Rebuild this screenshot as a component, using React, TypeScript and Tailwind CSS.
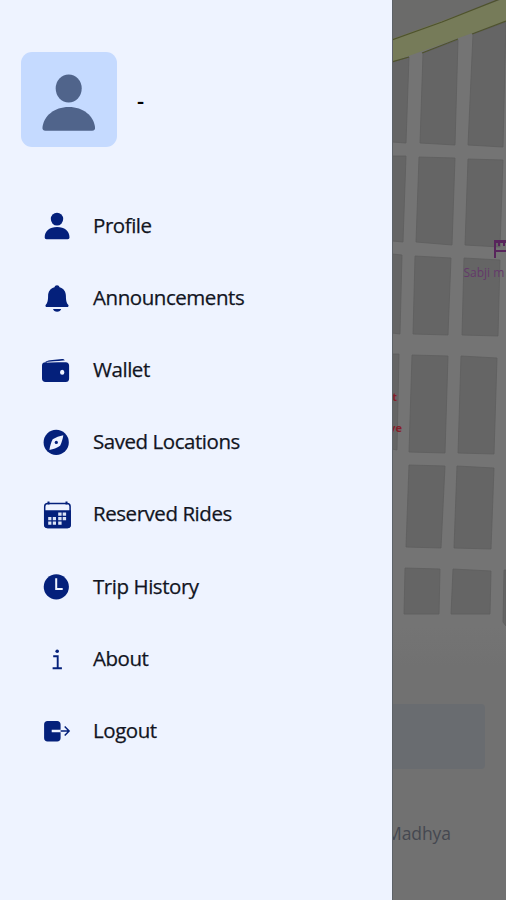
import type { ReactNode } from "react";

type Item = { label: string; icon: ReactNode };

function Icon({ children }: { children: ReactNode }) {
  return (
    <svg viewBox="0 0 32 32" className="h-8 w-8 shrink-0" fill="currentColor" aria-hidden="true">
      {children}
    </svg>
  );
}

const items: Item[] = [
  {
    label: "Profile",
    icon: (
      <Icon>
        <ellipse cx="17" cy="9.1" rx="6.2" ry="6.4" />
        <path d="M4.7 27.3c0-6.6 5.1-10.4 12.4-10.4s12.4 3.8 12.4 10.4c0 1.3-.6 2-1.9 2h-21c-1.3 0-1.9-.7-1.9-2Z" />
      </Icon>
    ),
  },
  {
    label: "Announcements",
    icon: (
      <Icon>
        <path d="M17 3.2c-1.4 0-2.2.8-2.5 2-4.2 1-6.4 4.5-6.4 8.5 0 6-1.2 7.7-2.3 9-.8 1-.3 2.4 1.2 2.4h20c1.5 0 2-1.4 1.2-2.4-1.1-1.3-2.3-3-2.3-9 0-4-2.2-7.5-6.4-8.5-.3-1.2-1.1-2-2.5-2Z" />
        <path d="M13 27h8.2c-.4 1.600-2 2.700-4.100 2.700s-3.700-1.100-4.100-2.700Z" />
      </Icon>
    ),
  },
  {
    label: "Wallet",
    icon: (
      <Icon>
        <path d="M5 8.3c1.200-1.200 3-1.700 5-2l12-1.400c1.400-.1 2.500.4 2.900 1.600L5 8.300Z" />
        <path
          fillRule="evenodd"
          d="M5.500 8.200h20.300c2 0 3.300 1.300 3.300 3.300v13.300c0 2-1.300 3.300-3.300 3.300H5.500c-2.200 0-3.500-1.300-3.500-3.500V11.400c0-2 1.400-3.200 3.500-3.200Zm16.700 7.500a2.200 2.500 0 1 0 0 5 2.200 2.500 0 0 0 0-5Z"
        />
        <path d="m7 8.300 18-1.300" stroke="#eef3ff" strokeWidth=".6" />
      </Icon>
    ),
  },
  {
    label: "Saved Locations",
    icon: (
      <Icon>
        <circle cx="16.200" cy="15.400" r="12.600" />
        <path d="M23.300 8.200c-.5 3.500-1.500 7-3.200 10.600-3.300 2.200-6.700 3.500-10.700 4.200.7-4 1.500-7.200 3.300-10.700 3.300-2 6.600-3.300 10.600-4.100Z" fill="#eef3ff" />
        <circle cx="16.300" cy="15.400" r="1.600" />
      </Icon>
    ),
  },
  {
    label: "Reserved Rides",
    icon: (
      <Icon>
        <rect x="4.700" y="4.400" width="25.400" height="24" rx="3" fill="#eef3ff" stroke="currentColor" strokeWidth="1.500" />
        <path d="M4 11.300h26.900v14.500c0 2.300-1 3.500-3.300 3.500H7.300C5 29.300 4 28 4 25.800Z" />
        <path d="M8.500 2.500v3M26.500 2.500v3" stroke="currentColor" strokeWidth="2" />
        <path
          d="M18.200 13.500h3.400v3.200h-3.400zM22.700 13.500h3.400v3.200h-3.400zM8.200 18h3.200v3.300H8.200zM12.800 18H16v3.300h-3.200zM18.200 18h3.400v3.300h-3.400zM22.700 18h3.400v3.300h-3.400zM8.200 22.500h3.200v3.300H8.200zM12.800 22.500H16v3.300h-3.200zM18.200 22.500h3.400v3.300h-3.400z"
          fill="#dce4f6"
        />
      </Icon>
    ),
  },
  {
    label: "Trip History",
    icon: (
      <Icon>
        <circle cx="16.300" cy="15.800" r="12.600" />
        <path d="M16.200 7.300V18h6.500" fill="none" stroke="#eef3ff" strokeWidth="2" />
      </Icon>
    ),
  },
  {
    label: "About",
    icon: (
      <Icon>
        <circle cx="17.200" cy="8.300" r="1.800" />
        <path d="M13.200 13.300h4.500v12M12.600 25.300h9.300" fill="none" stroke="currentColor" strokeWidth="1.900" />
      </Icon>
    ),
  },
  {
    label: "Logout",
    icon: (
      <Icon>
        <path d="M7.500 6h9.700c2 0 3.400 1.300 3.400 3.400v5.300h-8.900v2.600h8.900v5.700c0 2.200-1.300 3.500-3.400 3.500H7.500c-2.100 0-3.400-1.300-3.400-3.500V9.400C4.100 7.300 5.400 6 7.500 6Z" />
        <path d="M20.600 16H29M24.700 11.500l4.400 4.500-4.400 4.500" fill="none" stroke="currentColor" strokeWidth="1.500" />
      </Icon>
    ),
  },
];

const blocks = [
  "392,62 409,57 406,143 392,142",
  "423,53 458,40 455,145 420,143",
  "473,34 506,22 503,147 468,145",
  "392,156 406,156 403,242 392,241",
  "419,157 455,158 452,245 416,242",
  "468,159 503,160 500,247 465,245",
  "392,254 402,255 400,334 392,333",
  "415,256 451,258 448,335 413,334",
  "464,258 500,260 498,336 462,335",
  "392,354 399,354 397,450 392,449",
  "412,355 448,356 445,453 409,452",
  "461,356 497,358 494,454 458,453",
  "409,465 445,466 441,548 406,547",
  "457,466 494,468 491,549 454,548",
  "405,568 440,569 439,614 404,614",
  "453,569 491,571 490,614 451,614",
  "504,570 506,570 506,626 503,622",
];

function StreetMap() {
  return (
    <svg viewBox="392 0 114 900" className="block h-[900px] w-[114px]" aria-hidden="true">
      <defs>
        <linearGradient id="sheet" x1="0" y1="0" x2="0" y2="1">
          <stop offset="0" stopColor="#747474" />
          <stop offset=".15" stopColor="#717171" />
        </linearGradient>
      </defs>
      <rect x="392" width="114" height="900" fill="#747474" />
      <path d="M392 0h114L392 43Z" fill="#6b6b6a" />
      {blocks.map((points) => (
        <polygon key={points} points={points} fill="#656565" stroke="#5e5e5e" strokeWidth=".8" />
      ))}
      <path d="M392 39 L500 0 L506 0 L506 21 L392 62Z" fill="#767b59" />
      <path d="M392 40 442 22 500-1M392 62l17-5M422 53l36-14M472 34l34-13" fill="none" stroke="#4f532d" strokeWidth="1.300" />
      <path d="M493 240h13v3h-1v3h-2v-3h-3v3h-2v-3h-2v7h10v2h-10v6h-2v-18h-1Z" fill="#58255c" />
      <text x="463.500" y="277" fill="#64396a" fontFamily="Open Sans, Noto Sans, sans-serif" fontSize="12">
        Sabji m
      </text>
      <g fill="#851f2a" fontFamily="Open Sans, sans-serif" fontSize="11" fontWeight="700">
        <text x="397" y="401" textAnchor="end">t</text>
        <text x="402" y="432" textAnchor="end">ve</text>
      </g>
      <rect x="392" y="626" width="114" height="274" fill="url(#sheet)" />
      <rect x="360" y="704" width="125" height="65" rx="4" fill="#696c70" />
      <text x="386" y="840" fill="#454850" fontFamily="Open Sans, Noto Sans, sans-serif" fontSize="17.500" textLength="65">
        Madhya
      </text>
      <path d="M392.500 0v900" stroke="#5d6267" strokeWidth="1" />
    </svg>
  );
}

export default function App() {
  return (
    <div className="flex h-[900px] w-[506px] overflow-hidden bg-[#737373] font-['Open_Sans','Noto_Sans',sans-serif]">
      <aside className="w-[392px] shrink-0 bg-[#eef3ff]">
        <header className="flex items-center pt-[52px] pl-[21px]">
          <div className="h-[95px] w-[96px] rounded-[11px] bg-[#c5daff]">
            <svg viewBox="0 0 96 95" className="h-full w-full" fill="#50648b" aria-hidden="true">
              <ellipse cx="47.700" cy="36.500" rx="13" ry="14" />
              <path d="M21.500 75c1.500-11 11.500-20 26.300-20S72.500 64 74 75c.3 2.600-.6 3.800-3 3.800H24.500c-2.400 0-3.300-1.200-3-3.800Z" />
            </svg>
          </div>
          <span className="ml-5 text-[22px] font-semibold leading-none text-black">-</span>
        </header>
        <nav className="pt-[43px] pl-10">
          <ul>
            {items.map(({ label, icon }) => (
              <li key={label} className="flex h-[72.2px] items-center gap-[21px] text-[#04207b]">
                {icon}
                <span className="mb-[3px] text-[20.5px] leading-8 tracking-[-0.45px] whitespace-nowrap text-[#12151f] [-webkit-text-stroke:0.25px_#12151f]">
                  {label}
                </span>
              </li>
            ))}
          </ul>
        </nav>
      </aside>
      <main className="w-[114px] shrink-0">
        <StreetMap />
      </main>
    </div>
  );
}
